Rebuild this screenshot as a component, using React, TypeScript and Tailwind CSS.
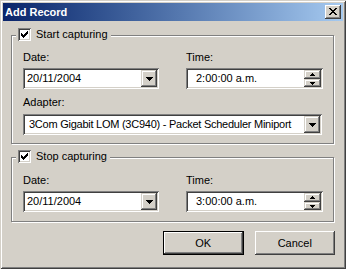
import React from "react";

const sunken =
  "shadow-[inset_1px_1px_#808080,inset_-1px_-1px_#ffffff,inset_2px_2px_#404040,inset_-2px_-2px_#d4d0c8]";
const raised =
  "shadow-[inset_-1px_-1px_#404040,inset_1px_1px_#d4d0c8,inset_-2px_-2px_#808080,inset_2px_2px_#ffffff]";
const pushRaised =
  "shadow-[inset_-1px_-1px_#404040,inset_1px_1px_#ffffff,inset_-2px_-2px_#808080]";

const CheckMark = () => {
  const offsets = [2, 3, 4, 3, 2, 1, 0];
  return (
    <svg width="13" height="13" viewBox="0 0 13 13" shapeRendering="crispEdges">
      {offsets.map((o, i) => (
        <rect key={i} x={3 + i} y={3 + o} width="1" height="3" fill="#000" />
      ))}
    </svg>
  );
};

const CheckBox = () => (
  <div className={`w-[13px] h-[13px] bg-white ${sunken}`}>
    <CheckMark />
  </div>
);

const CloseX = () => {
  const rows: [number, number][][] = [
    [[0, 2], [6, 2]],
    [[1, 2], [5, 2]],
    [[2, 4]],
    [[3, 2]],
    [[2, 4]],
    [[1, 2], [5, 2]],
    [[0, 2], [6, 2]],
  ];
  return (
    <svg width="8" height="7" viewBox="0 0 8 7" shapeRendering="crispEdges">
      {rows.map((r, y) =>
        r.map(([x, w], k) => <rect key={`${y}-${k}`} x={x} y={y} width={w} height="1" fill="#000" />)
      )}
    </svg>
  );
};

// triangle made of rows, pointing down or up
const Arrow = ({ size, up }: { size: number; up?: boolean }) => {
  const rows = Array.from({ length: size }, (_, i) => size - i);
  const w = size * 2 - 1;
  return (
    <svg width={w} height={size} viewBox={`0 0 ${w} ${size}`} shapeRendering="crispEdges">
      {rows.map((n, i) => (
        <rect
          key={i}
          x={size - n}
          y={up ? size - 1 - i : i}
          width={n * 2 - 1}
          height="1"
          fill="#000"
        />
      ))}
    </svg>
  );
};

const Combo = ({ text, width, pad }: { text: string; width: string; pad: string }) => (
  <div className={`${width} h-[21px] bg-white ${sunken} flex items-center p-[2px]`}>
    <span className={`flex-1 ${pad} text-[11px] leading-[13px] whitespace-nowrap overflow-hidden`}>{text}</span>
    <div className={`w-[16px] h-[17px] bg-[#d4d0c8] ${raised} flex items-center justify-center`}>
      <Arrow size={4} />
    </div>
  </div>
);

const TimeField = ({ text }: { text: string }) => (
  <div className={`w-[137px] h-[21px] bg-white ${sunken} flex items-center p-[2px]`}>
    <span className="flex-1 pl-[8px] text-[11px] leading-[13px] whitespace-nowrap">{text}</span>
    <div className="w-[17px] h-[17px] flex flex-col">
      <div className={`h-[9px] bg-[#d4d0c8] ${raised} flex items-center justify-center`}>
        <Arrow size={3} up />
      </div>
      <div className={`h-[8px] bg-[#d4d0c8] ${raised} flex items-center justify-center`}>
        <Arrow size={3} />
      </div>
    </div>
  </div>
);

const Label = ({ children, className = "" }: { children: React.ReactNode; className?: string }) => (
  <div className={`h-[13px] text-[11px] leading-[13px] ${className}`}>{children}</div>
);

const GroupBox = ({
  title,
  height,
  children,
}: {
  title: string;
  height: string;
  children: React.ReactNode;
}) => (
  <div
    className={`w-[323px] ${height} border border-[#808080] shadow-[1px_1px_#ffffff,inset_1px_1px_#ffffff] flex flex-col`}
  >
    <div className="-mt-[8px] ml-[4px] self-start px-[2px] h-[13px] bg-[#d4d0c8] flex items-center gap-[5px]">
      <CheckBox />
      <span className="text-[11px] leading-[13px] pr-[1px]">{title}</span>
    </div>
    <div className="pl-[11px]">{children}</div>
  </div>
);

const DateTimeRow = ({ date, time, top }: { date: string; time: string; top: string }) => (
  <div className="flex">
    <div className="w-[136px] flex flex-col">
      <Label className={top}>Date:</Label>
      <div className="mt-[4px]">
        <Combo text={date} width="w-[136px]" pad="pl-[2px]" />
      </div>
    </div>
    <div className="ml-[27px] flex flex-col">
      <Label className={top}>Time:</Label>
      <div className="mt-[4px]">
        <TimeField text={time} />
      </div>
    </div>
  </div>
);

export default function App() {
  return (
    <div
      className={`w-[346px] h-[269px] bg-[#d4d0c8] p-[3px] flex flex-col text-black font-['Liberation_Sans',Arial,sans-serif] shadow-[inset_1px_1px_#d4d0c8,inset_-1px_-1px_#404040,inset_2px_2px_#ffffff,inset_-2px_-2px_#808080] overflow-hidden`}
    >
      <div className="h-[18px] bg-gradient-to-r from-[#0a246a] to-[#a6caf0] flex items-center justify-between">
        <span className="pl-[2px] text-white font-bold text-[11px] leading-[13px]">Add Record</span>
        <div className={`mr-[2px] w-[16px] h-[14px] bg-[#d4d0c8] ${pushRaised} flex items-center justify-center pb-[1px]`}>
          <CloseX />
        </div>
      </div>

      <div className="px-[8px] flex flex-col">
        <div className="mt-[14px]">
          <GroupBox title="Start capturing" height="h-[109px]">
            <DateTimeRow date="20/11/2004" time="2:00:00 a.m." top="mt-[10px]" />
            <Label className="mt-[7px]">Adapter:</Label>
            <div className="mt-[5px]">
              <Combo
                text="3Com Gigabit LOM (3C940) - Packet Scheduler Miniport"
                width="w-[299px]"
                pad="pl-[4px] tracking-[-0.25px]"
              />
            </div>
          </GroupBox>
        </div>

        <div className="mt-[13px]">
          <GroupBox title="Stop capturing" height="h-[65px]">
            <DateTimeRow date="20/11/2004" time="3:00:00 a.m." top="mt-[11px]" />
          </GroupBox>
        </div>

        <div className="mt-[9px] ml-[152px] flex gap-[11px]">
          <div className="w-[81px] h-[24px] border border-black">
            <div className={`w-full h-full ${pushRaised} flex items-center justify-center text-[11px] leading-[13px]`}>
              OK
            </div>
          </div>
          <div className={`w-[81px] h-[24px] ${pushRaised} flex items-center justify-center text-[11px] leading-[13px]`}>
            Cancel
          </div>
        </div>
      </div>
    </div>
  );
}
